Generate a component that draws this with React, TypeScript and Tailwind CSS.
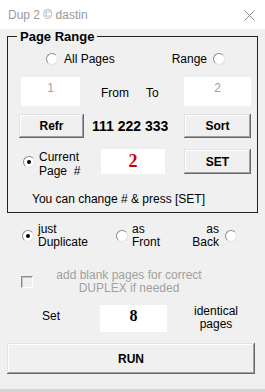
import React from "react"

const Radio = ({ checked = false }: { checked?: boolean }) => (
  <span className="flex h-[12px] w-[12px] shrink-0 items-center justify-center rounded-full border border-t-[#8d8d8d] border-l-[#8d8d8d] border-b-[#e3e3e3] border-r-[#e3e3e3] bg-white">
    {checked && <span className="h-[4px] w-[4px] rounded-full bg-black" />}
  </span>
)

const WinButton = ({ label, className = "" }: { label: string; className?: string }) => (
  <button
    className={`flex shrink-0 items-center justify-center bg-[#f0f0f0] text-[12px] font-bold leading-none text-black shadow-[inset_-1px_-1px_0_#696969,inset_1px_1px_0_#e3e3e3,inset_-2px_-2px_0_#a0a0a0,inset_2px_2px_0_#ffffff] ${className}`}
  >
    {label}
  </button>
)

export default function App() {
  return (
    <div className="flex h-[392px] w-[265px] flex-col bg-[#f0f0f0] font-['Liberation_Sans',Arial,sans-serif] text-[12px] text-black">
      {/* barre de titre */}
      <div className="flex h-[29px] shrink-0 items-center justify-between bg-white pl-[8px] pr-[10px]">
        <span className="text-[12px] text-[#9a9a9a]">Dup 2 © dastin</span>
        <svg width="11" height="11" viewBox="0 0 11 11" className="mt-[1px]">
          <path d="M0.5 0.5 L10.5 10.5 M10.5 0.5 L0.5 10.5" stroke="#8c8c8c" strokeWidth="1" />
        </svg>
      </div>

      {/* cadre Page Range */}
      <fieldset className="mx-[7px] min-w-0 border border-[#222] px-0 pb-[5px]">
        <legend className="ml-[9px] px-[3px] text-[13px] font-bold leading-[15px]">Page Range</legend>

        <div className="mt-[7px] flex h-[16px] items-center">
          <div className="ml-[38px] flex items-center gap-[6px]">
            <Radio />
            <span>All Pages</span>
          </div>
          <div className="ml-auto mr-[32px] flex items-center gap-[6px]">
            <span>Range</span>
            <Radio />
          </div>
        </div>

        <div className="mt-[10px] flex h-[29px] items-center">
          <div className="ml-[13px] flex h-[29px] w-[59px] justify-center bg-white pt-[3px] leading-[16px] text-[#a0a0a0]">1</div>
          <span className="ml-[21px] pt-[2px]">From</span>
          <span className="ml-[17px] pt-[2px]">To</span>
          <div className="ml-auto mr-[6px] flex h-[29px] w-[67px] justify-center bg-white pt-[3px] leading-[16px] text-[#a0a0a0]">2</div>
        </div>

        <div className="mt-[8px] flex h-[24px] items-center">
          <WinButton label="Refr" className="ml-[11px] h-[24px] w-[65px]" />
          <span className="ml-[8px] text-[14px] font-bold">111 222 333</span>
          <WinButton label="Sort" className="ml-auto mr-[6px] h-[24px] w-[67px]" />
        </div>

        <div className="mt-[11px] flex h-[25px] items-center">
          <div className="ml-[15px]">
            <Radio checked />
          </div>
          <div className="ml-[4px] w-[62px] whitespace-pre pt-[4px] leading-[14px]">
            <div>Current</div>
            <div>Page  #</div>
          </div>
          <div className="flex h-[25px] w-[64px] justify-center bg-white font-['Liberation_Serif',serif] text-[18px] font-bold leading-[24px] text-[#c80000]">
            2
          </div>
          <WinButton label="SET" className="ml-auto mr-[6px] h-[25px] w-[67px]" />
        </div>

        <div className="ml-[24px] mt-[17px] leading-[16px]">You can change # &amp; press [SET]</div>
      </fieldset>

      {/* options */}
      <div className="mt-[10px] flex h-[26px] items-center">
        <div className="flex w-[116px] items-center pl-[22px]">
          <Radio checked />
          <div className="ml-[4px] leading-[13px]">
            <div>just</div>
            <div>Duplicate</div>
          </div>
        </div>
        <div className="flex items-center">
          <Radio />
          <div className="ml-[4px] leading-[13px]">
            <div>as</div>
            <div>Front</div>
          </div>
        </div>
        <div className="ml-auto mr-[28px] flex items-center">
          <div className="mr-[6px] text-right leading-[13px]">
            <div>as</div>
            <div>Back</div>
          </div>
          <Radio />
        </div>
      </div>

      <div className="mt-[20px] flex h-[26px] items-center">
        <span className="ml-[21px] h-[12px] w-[12px] shrink-0 border border-t-[#8d8d8d] border-l-[#8d8d8d] border-b-white border-r-white bg-[#f0f0f0] shadow-[inset_1px_1px_0_#c4c4c4]" />
        <div className="ml-[8px] w-[176px] text-center leading-[13px] text-[#a0a0a0]">
          <div>add blank pages for correct</div>
          <div>DUPLEX if needed</div>
        </div>
      </div>

      <div className="mt-[10px] flex h-[27px] items-start">
        <span className="ml-[42px] w-[58px] pt-[3px] leading-[16px]">Set</span>
        <div className="flex h-[27px] w-[67px] justify-center bg-white pt-[1px] font-['Liberation_Serif',serif] text-[16px] font-bold leading-[20px]">
          8
        </div>
        <div className="ml-[19px] w-[60px] text-center leading-[13px]">
          <div>identical</div>
          <div>pages</div>
        </div>
      </div>

      <WinButton label="RUN" className="mx-[7px] mt-[11px] h-[31px] w-[248px]" />

      <div className="flex-1" />
      <div className="h-[3px] shrink-0 bg-[#d4d4d4]" />
    </div>
  )
}
